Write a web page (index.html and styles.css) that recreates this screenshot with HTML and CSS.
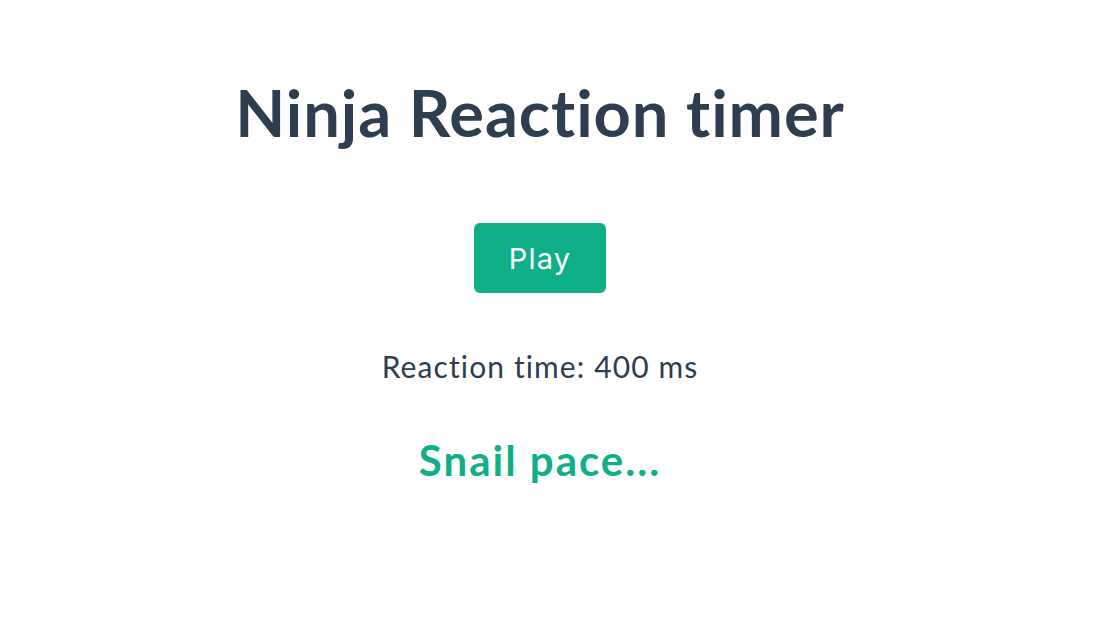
FILE: index.html
```html
<!DOCTYPE html>
<html lang="en">
<head>
<meta charset="utf-8">
<title>Ninja Reaction timer</title>
<link rel="stylesheet" href="styles.css">
</head>
<body>
<div class="app">
  <h1 class="title">Ninja Reaction timer</h1>
  <button class="play">Play</button>
  <p class="result">Reaction time: 400 ms</p>
  <p class="rank">Snail pace...</p>
</div>
</body>
</html>
```

FILE: styles.css
```css
html, body {
  margin: 0;
  padding: 0;
  background: #ffffff;
}
.app {
  box-sizing: border-box;
  width: 1080px;
  display: flex;
  flex-direction: column;
  align-items: center;
  font-family: Lato, "Open Sans", sans-serif;
  font-variant-ligatures: none;
  color: #2c3e50;
  padding-top: 72px;
}
.title {
  margin: 0;
  font-size: 65px;
  font-weight: 700;
  line-height: 80px;
  letter-spacing: 0.9px;
}
.play {
  margin-top: 71px;
  width: 132px;
  height: 70px;
  border: none;
  border-radius: 6px;
  background: #0faf87;
  color: #ffffff;
  font-family: Inter, "Open Sans", sans-serif;
  font-size: 29px;
  letter-spacing: 1.2px;
  padding: 0;
}
.result {
  margin: 53px 0 0;
  font-size: 30px;
  line-height: 40px;
  letter-spacing: 1.1px;
}
.rank {
  margin: 44px 0 0;
  font-size: 42px;
  font-weight: 700;
  color: #0faf87;
  line-height: 60px;
  letter-spacing: 2px;
}
```
